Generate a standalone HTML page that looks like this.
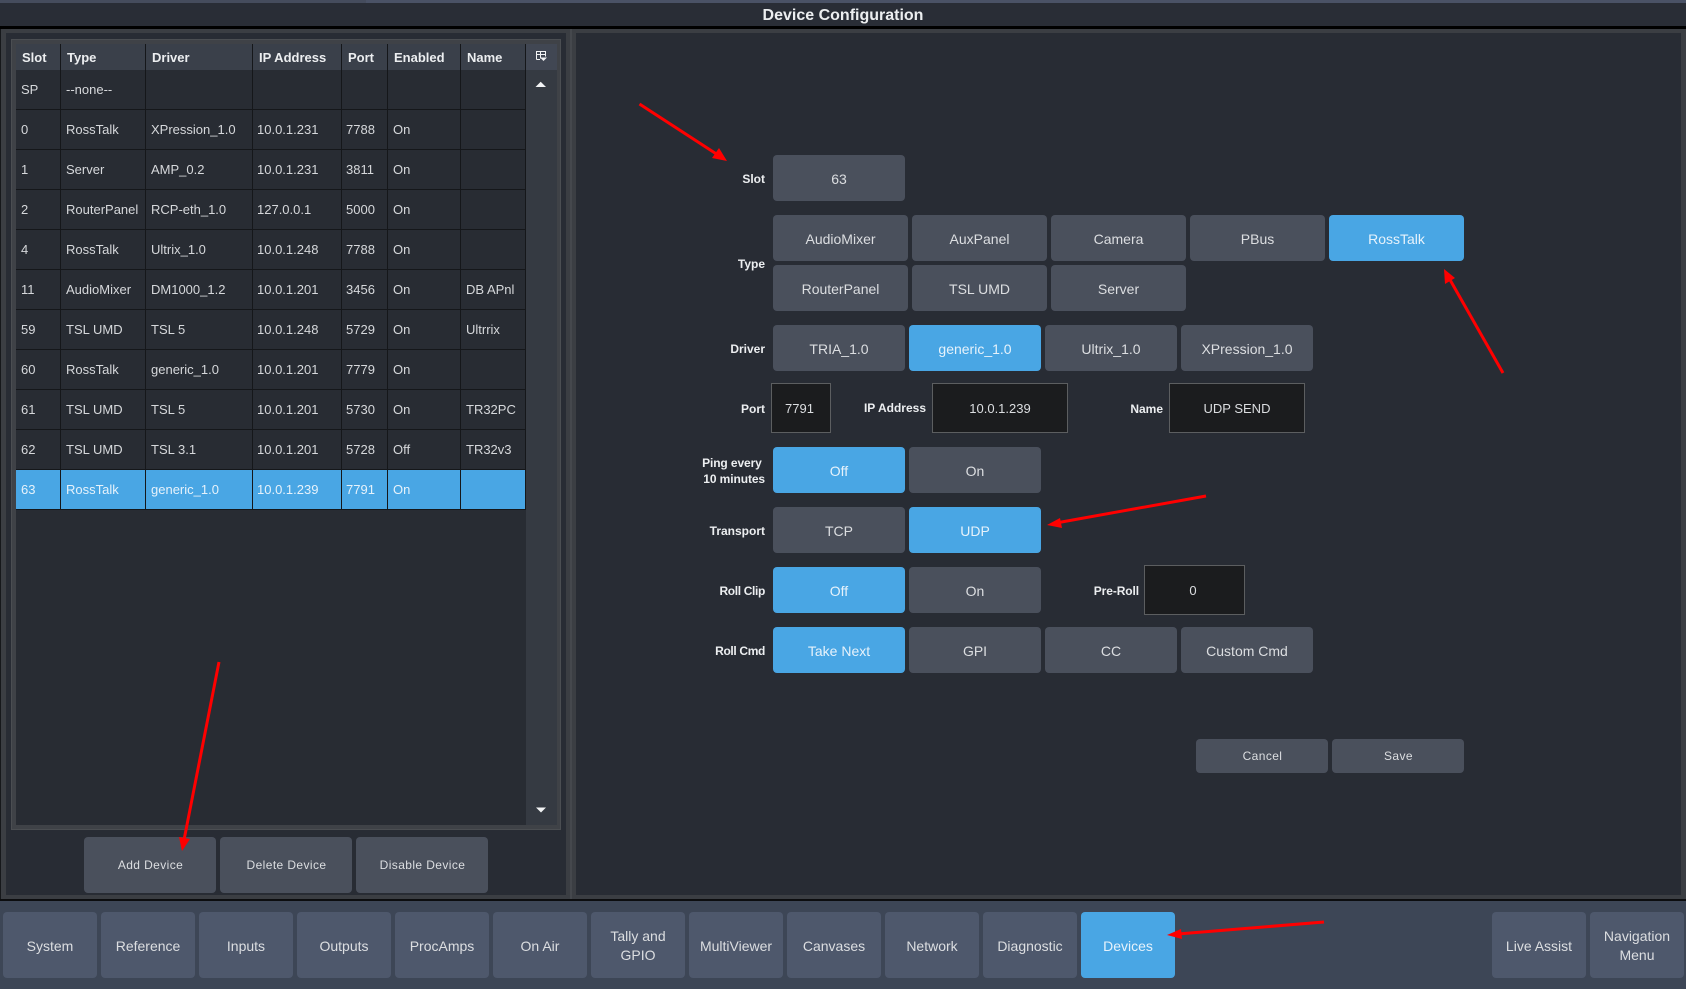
<!DOCTYPE html>
<html><head><meta charset="utf-8"><title>Device Configuration</title>
<style>
*{box-sizing:border-box}
html,body{margin:0;padding:0;width:1686px;height:989px;overflow:hidden;background:#16181b}
body{position:relative;font-family:"Liberation Sans",sans-serif;color:#e4e6e8}
.a{position:absolute}
.b{position:absolute;display:flex;align-items:center;justify-content:center;text-align:center;background:#4a505c;border-radius:4px;font-size:14px;color:#dcdee1;line-height:19px;padding-top:3px}
.on{background:#49a6e4;color:#e6f2fb}
.s{font-size:12px;letter-spacing:.4px;padding-left:1px;padding-top:1px}
.n{background:#4e586c;border-radius:4px}
.d{padding-top:1px}
.i{position:absolute;display:flex;align-items:center;justify-content:center;background:#1b1c1e;border:1px solid #5c5e60;font-size:13px;color:#dcdee1}
.l{position:absolute;font-weight:bold;font-size:12px;color:#eceef0;text-align:right;line-height:16px;padding-top:1px}
.t{letter-spacing:-.35px}
.u{letter-spacing:-.1px}
table{position:absolute;left:16px;top:44px;width:510px;border-collapse:separate;border-spacing:0;table-layout:fixed;font-size:13px;color:#d6d8db}
td,th{padding:0 0 0 5px;border-right:1px solid #15171a;border-bottom:1px solid #15171a;height:40px;text-align:left;font-weight:normal;white-space:nowrap;overflow:hidden}
td:nth-child(4),td:nth-child(5){padding-left:4px}
th{height:26px;background:#3a404a;font-weight:bold;color:#eceef0;border-bottom:0;padding-left:6px;padding-top:1px}
tr.sel td{background:#49a6e4;color:#e6f2fb}
</style></head><body>
<div class="a" style="left:0;top:0;width:1686px;height:26px;background:#292d36"></div>
<div class="a" style="left:0;top:0;width:1686px;height:3px;background:#4a5266"></div>
<div class="a" style="left:0;top:0;width:366px;height:3px;background:#454c5d"></div>
<div class="a" style="left:0;top:26px;width:1686px;height:3px;background:#000"></div>
<div class="a" style="left:0;top:5px;width:1686px;text-align:center;font-size:16px;font-weight:bold;line-height:22px;color:#eceef0">Device Configuration</div>

<div class="a" style="left:1px;top:29px;width:1685px;height:870px;background:#3b3e43"></div>
<div class="a" style="left:570px;top:29px;width:2px;height:870px;background:#45484d"></div>
<div class="a" style="left:6px;top:33px;width:560px;height:862px;background:#282c34"></div>
<div class="a" style="left:576px;top:33px;width:1105px;height:862px;background:#282c34"></div>

<div class="a" style="left:11px;top:39px;width:550px;height:791px;background:#3f4247;border:1px solid #4b4e52"></div>
<div class="a" style="left:16px;top:44px;width:510px;height:781px;background:#282c33"></div>
<div class="a" style="left:526px;top:44px;width:31px;height:781px;background:#353a42"></div>
<div class="a" style="left:526px;top:44px;width:31px;height:26px;background:#414753"></div>
<svg class="a" style="left:535px;top:50px" width="13" height="13" viewBox="0 0 13 13"><path d="M1.5 9.5V1.5H10.5V6.5M1.5 4.5H10.5M5.5 1.5V8.5M1.5 9.5H5" fill="none" stroke="#f2f3f4" stroke-width="1"/><path d="M5 7.5H12L8.5 11Z" fill="#f2f3f4"/></svg>
<svg class="a" style="left:535px;top:81px" width="12" height="7"><path d="M.5 6L5.7 .8L11 6Z" fill="#f2f3f4"/></svg>
<svg class="a" style="left:535px;top:807px" width="12" height="7"><path d="M1 .5H11L6 5.5Z" fill="#f2f3f4"/></svg>

<table>
<colgroup><col style="width:45px"><col style="width:85px"><col style="width:107px"><col style="width:89px"><col style="width:46px"><col style="width:73px"><col style="width:65px"></colgroup>
<tr><th>Slot</th><th>Type</th><th>Driver</th><th>IP Address</th><th>Port</th><th>Enabled</th><th>Name</th></tr>
<tr><td>SP</td><td>--none--</td><td></td><td></td><td></td><td></td><td></td></tr>
<tr><td>0</td><td>RossTalk</td><td>XPression_1.0</td><td>10.0.1.231</td><td>7788</td><td>On</td><td></td></tr>
<tr><td>1</td><td>Server</td><td>AMP_0.2</td><td>10.0.1.231</td><td>3811</td><td>On</td><td></td></tr>
<tr><td>2</td><td>RouterPanel</td><td>RCP-eth_1.0</td><td>127.0.0.1</td><td>5000</td><td>On</td><td></td></tr>
<tr><td>4</td><td>RossTalk</td><td>Ultrix_1.0</td><td>10.0.1.248</td><td>7788</td><td>On</td><td></td></tr>
<tr><td>11</td><td>AudioMixer</td><td>DM1000_1.2</td><td>10.0.1.201</td><td>3456</td><td>On</td><td>DB APnl</td></tr>
<tr><td>59</td><td>TSL UMD</td><td>TSL 5</td><td>10.0.1.248</td><td>5729</td><td>On</td><td>Ultrrix</td></tr>
<tr><td>60</td><td>RossTalk</td><td>generic_1.0</td><td>10.0.1.201</td><td>7779</td><td>On</td><td></td></tr>
<tr><td>61</td><td>TSL UMD</td><td>TSL 5</td><td>10.0.1.201</td><td>5730</td><td>On</td><td>TR32PC</td></tr>
<tr><td>62</td><td>TSL UMD</td><td>TSL 3.1</td><td>10.0.1.201</td><td>5728</td><td>Off</td><td>TR32v3</td></tr>
<tr class="sel"><td>63</td><td>RossTalk</td><td>generic_1.0</td><td>10.0.1.239</td><td>7791</td><td>On</td><td></td></tr>
</table>

<div class="b s" style="left:84px;top:837px;width:132px;height:56px">Add Device</div>
<div class="b s" style="left:220px;top:837px;width:132px;height:56px">Delete Device</div>
<div class="b s" style="left:356px;top:837px;width:132px;height:56px">Disable Device</div>

<div class="l" style="left:665px;top:170px;width:100px">Slot</div>
<div class="b" style="left:773px;top:155px;width:132px;height:46px">63</div>

<div class="l" style="left:665px;top:255px;width:100px">Type</div>
<div class="b" style="left:773px;top:215px;width:135px;height:46px">AudioMixer</div>
<div class="b" style="left:912px;top:215px;width:135px;height:46px">AuxPanel</div>
<div class="b" style="left:1051px;top:215px;width:135px;height:46px">Camera</div>
<div class="b" style="left:1190px;top:215px;width:135px;height:46px">PBus</div>
<div class="b on" style="left:1329px;top:215px;width:135px;height:46px">RossTalk</div>
<div class="b" style="left:773px;top:265px;width:135px;height:46px">RouterPanel</div>
<div class="b" style="left:912px;top:265px;width:135px;height:46px">TSL UMD</div>
<div class="b" style="left:1051px;top:265px;width:135px;height:46px">Server</div>

<div class="l" style="left:665px;top:340px;width:100px">Driver</div>
<div class="b" style="left:773px;top:325px;width:132px;height:46px">TRIA_1.0</div>
<div class="b on" style="left:909px;top:325px;width:132px;height:46px">generic_1.0</div>
<div class="b" style="left:1045px;top:325px;width:132px;height:46px">Ultrix_1.0</div>
<div class="b" style="left:1181px;top:325px;width:132px;height:46px">XPression_1.0</div>

<div class="l" style="left:665px;top:400px;width:100px">Port</div>
<div class="i" style="left:771px;top:383px;width:60px;height:50px;padding-right:3px">7791</div>
<div class="l" style="left:826px;top:399px;width:100px">IP Address</div>
<div class="i" style="left:932px;top:383px;width:136px;height:50px">10.0.1.239</div>
<div class="l" style="left:1063px;top:400px;width:100px">Name</div>
<div class="i" style="left:1169px;top:383px;width:136px;height:50px">UDP SEND</div>

<div class="l u" style="left:665px;top:454px;width:100px">Ping every&nbsp;<br>10 minutes</div>
<div class="b on" style="left:773px;top:447px;width:132px;height:46px">Off</div>
<div class="b" style="left:909px;top:447px;width:132px;height:46px">On</div>

<div class="l" style="left:665px;top:522px;width:100px">Transport</div>
<div class="b" style="left:773px;top:507px;width:132px;height:46px">TCP</div>
<div class="b on" style="left:909px;top:507px;width:132px;height:46px">UDP</div>

<div class="l t" style="left:665px;top:582px;width:100px">Roll Clip</div>
<div class="b on" style="left:773px;top:567px;width:132px;height:46px">Off</div>
<div class="b" style="left:909px;top:567px;width:132px;height:46px">On</div>
<div class="l u" style="left:1039px;top:582px;width:100px">Pre-Roll</div>
<div class="i" style="left:1144px;top:565px;width:101px;height:50px;padding-right:3px">0</div>

<div class="l t" style="left:665px;top:642px;width:100px">Roll Cmd</div>
<div class="b on" style="left:773px;top:627px;width:132px;height:46px">Take Next</div>
<div class="b" style="left:909px;top:627px;width:132px;height:46px">GPI</div>
<div class="b" style="left:1045px;top:627px;width:132px;height:46px">CC</div>
<div class="b" style="left:1181px;top:627px;width:132px;height:46px">Custom Cmd</div>

<div class="b s" style="left:1196px;top:739px;width:132px;height:34px">Cancel</div>
<div class="b s" style="left:1332px;top:739px;width:132px;height:34px">Save</div>

<div class="a" style="left:0;top:899px;width:1686px;height:2px;background:#0c0d0f"></div>
<div class="a" style="left:0;top:901px;width:1686px;height:88px;background:#3d4656"></div>
<div class="b n" style="left:3px;top:912px;width:94px;height:66px">System</div>
<div class="b n" style="left:101px;top:912px;width:94px;height:66px">Reference</div>
<div class="b n" style="left:199px;top:912px;width:94px;height:66px">Inputs</div>
<div class="b n" style="left:297px;top:912px;width:94px;height:66px">Outputs</div>
<div class="b n" style="left:395px;top:912px;width:94px;height:66px">ProcAmps</div>
<div class="b n" style="left:493px;top:912px;width:94px;height:66px">On Air</div>
<div class="b n d" style="left:591px;top:912px;width:94px;height:66px">Tally and<br>GPIO</div>
<div class="b n" style="left:689px;top:912px;width:94px;height:66px">MultiViewer</div>
<div class="b n" style="left:787px;top:912px;width:94px;height:66px">Canvases</div>
<div class="b n" style="left:885px;top:912px;width:94px;height:66px">Network</div>
<div class="b n" style="left:983px;top:912px;width:94px;height:66px">Diagnostic</div>
<div class="b on" style="left:1081px;top:912px;width:94px;height:66px">Devices</div>
<div class="b n" style="left:1492px;top:912px;width:94px;height:66px">Live Assist</div>
<div class="b n d" style="left:1590px;top:912px;width:94px;height:66px">Navigation<br>Menu</div>

<svg class="a" style="left:0;top:0" width="1686" height="989" viewBox="0 0 1686 989">
<g stroke="#f00" stroke-width="3" fill="#f00">
<line x1="639.5" y1="104" x2="718" y2="155"/>
<line x1="1503" y1="373" x2="1449" y2="278"/>
<line x1="1206" y1="496" x2="1056" y2="523"/>
<line x1="219" y1="662" x2="184" y2="840"/>
<line x1="1324" y1="922" x2="1178" y2="934"/>
</g>
<g fill="#f00">
<polygon points="727,161 712,158 719,148"/>
<polygon points="1444,269 1455,278 1445,284"/>
<polygon points="1047,525 1060,518 1062,528"/>
<polygon points="182,851 179,837 190,839"/>
<polygon points="1167,935 1181,929 1182,939"/>
</g>
</svg>
</body></html>
